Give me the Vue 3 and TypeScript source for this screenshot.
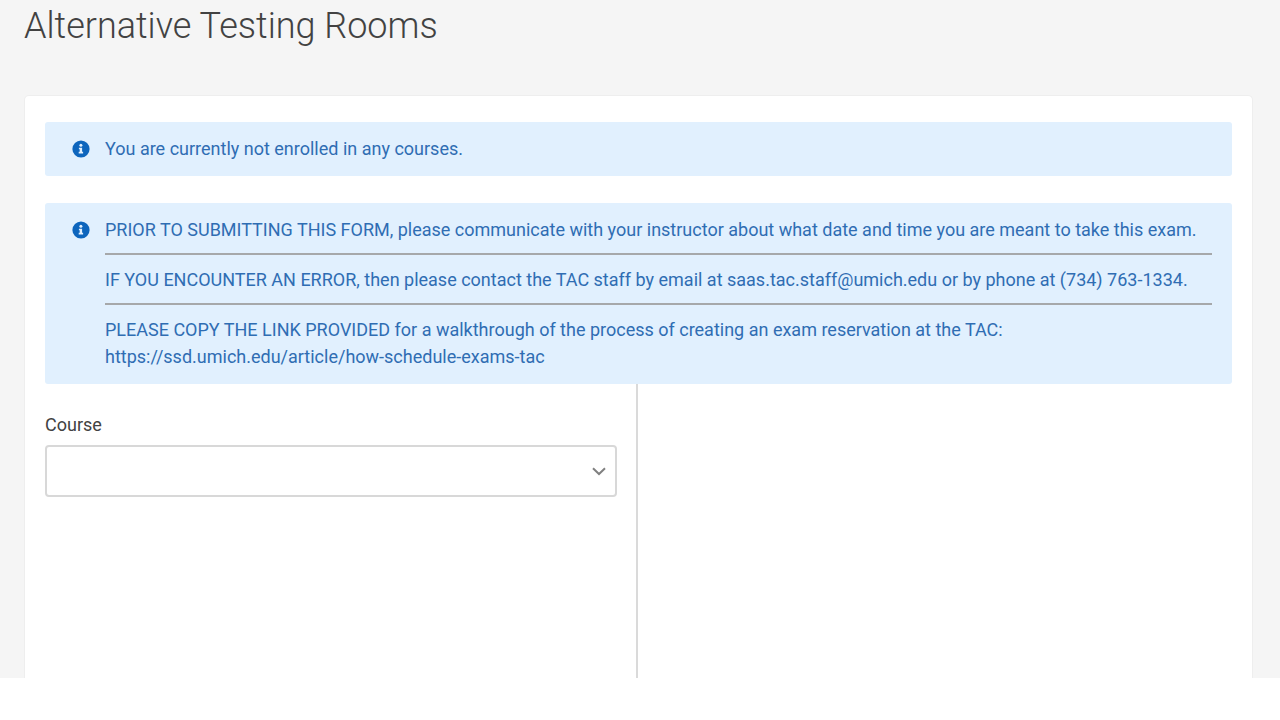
<script setup lang="ts">
import { ref } from 'vue'

const notices: string[][] = [
  ['You are currently not enrolled in any courses.'],
  [
    'PRIOR TO SUBMITTING THIS FORM, please communicate with your instructor about what date and time you are meant to take this exam.',
    'IF YOU ENCOUNTER AN ERROR, then please contact the TAC staff by email at saas.tac.staff@umich.edu or by phone at (734) 763-1334.',
    'PLEASE COPY THE LINK PROVIDED for a walkthrough of the process of creating an exam reservation at the TAC:\nhttps://ssd.umich.edu/article/how-schedule-exams-tac',
  ],
]
const course = ref('')
</script>

<template>
  <div class="shell">
    <main class="page">
      <h1 class="title">Alternative Testing Rooms</h1>
      <section class="card">
        <div class="notices">
          <div v-for="(notice, n) in notices" :key="n" class="notice" role="status">
            <svg class="info" viewBox="0 0 18 18" aria-hidden="true">
              <circle cx="9" cy="9" r="8.6" fill="#0d65bd" />
              <circle cx="8.9" cy="5.2" r="1.5" fill="#e1f0fe" />
              <path d="M6.9 7.7h3.2v4.1h1v1.7H6.7v-1.7h1V9.2h-.8z" fill="#e1f0fe" />
            </svg>
            <div class="body">
              <template v-for="(text, i) in notice" :key="i">
                <hr v-if="i > 0" class="rule" />
                <p class="text">{{ text }}</p>
              </template>
            </div>
          </div>
        </div>
        <div class="columns">
          <form class="fields">
            <label class="label" for="course">Course</label>
            <div class="select-wrap">
              <select id="course" v-model="course" class="select">
                <option value=""></option>
              </select>
              <svg class="chevron" viewBox="0 0 14 9" aria-hidden="true">
                <path d="M1 1.300 7 7l6-5.700" fill="none" stroke="#808080" stroke-width="2" />
              </svg>
            </div>
          </form>
          <div class="details"></div>
        </div>
      </section>
    </main>
  </div>
</template>

<style>
body {
  background: #fff;
}
</style>

<style scoped>
.shell {
  box-sizing: border-box;
  min-height: 100vh;
  padding-bottom: 42px;
  display: flex;
  font-family: Roboto, "Liberation Sans", sans-serif;
  color: #424242;
}
.page {
  flex: 1;
  min-width: 0;
  box-sizing: border-box;
  padding: 5px 27px 0 24px;
  display: flex;
  flex-direction: column;
  background: #f5f5f5;
}
.title {
  margin: 0 0 48px;
  font-size: 36px;
  line-height: 42px;
  font-weight: 300;
}
.card {
  flex: 1;
  display: flex;
  flex-direction: column;
  padding: 26px 20px 0;
  border: 1px solid #eee;
  border-bottom: 0;
  border-radius: 5px 5px 0 0;
  background: #fff;
}
.notices {
  display: grid;
  gap: 27px;
}
.notice {
  display: flex;
  padding: 13px 20px 14px 27px;
  border-radius: 3px;
  background: #e1f0fe;
  color: #2f6db3;
}
.info {
  flex: none;
  width: 18px;
  height: 18px;
  margin: 5px 15px 0 0;
}
.body {
  flex: 1;
  min-width: 0;
}
.text {
  margin: 0;
  font-size: 18px;
  line-height: 27px;
  white-space: pre-line;
}
.rule {
  height: 2px;
  margin: 10px 0 11px;
  border: 0;
  background: #a6a8aa;
}
.columns {
  flex: 1;
  display: grid;
  grid-template-columns: 1fr 1fr;
  margin-right: 2px;
}
.fields {
  padding: 27px 19px 24px 0;
  border-right: 2px solid #dadada;
}
.label {
  display: block;
  margin-bottom: 7px;
  font-size: 18px;
  line-height: 27px;
}
.select-wrap {
  position: relative;
}
.select {
  display: block;
  width: 100%;
  height: 52px;
  padding: 0 40px 0 16px;
  appearance: none;
  border: 2px solid #d8d8d8;
  border-radius: 4px;
  background: #fff;
  font: inherit;
}
.chevron {
  position: absolute;
  right: 11px;
  top: 22px;
  width: 14px;
  height: 9px;
  pointer-events: none;
}
</style>
